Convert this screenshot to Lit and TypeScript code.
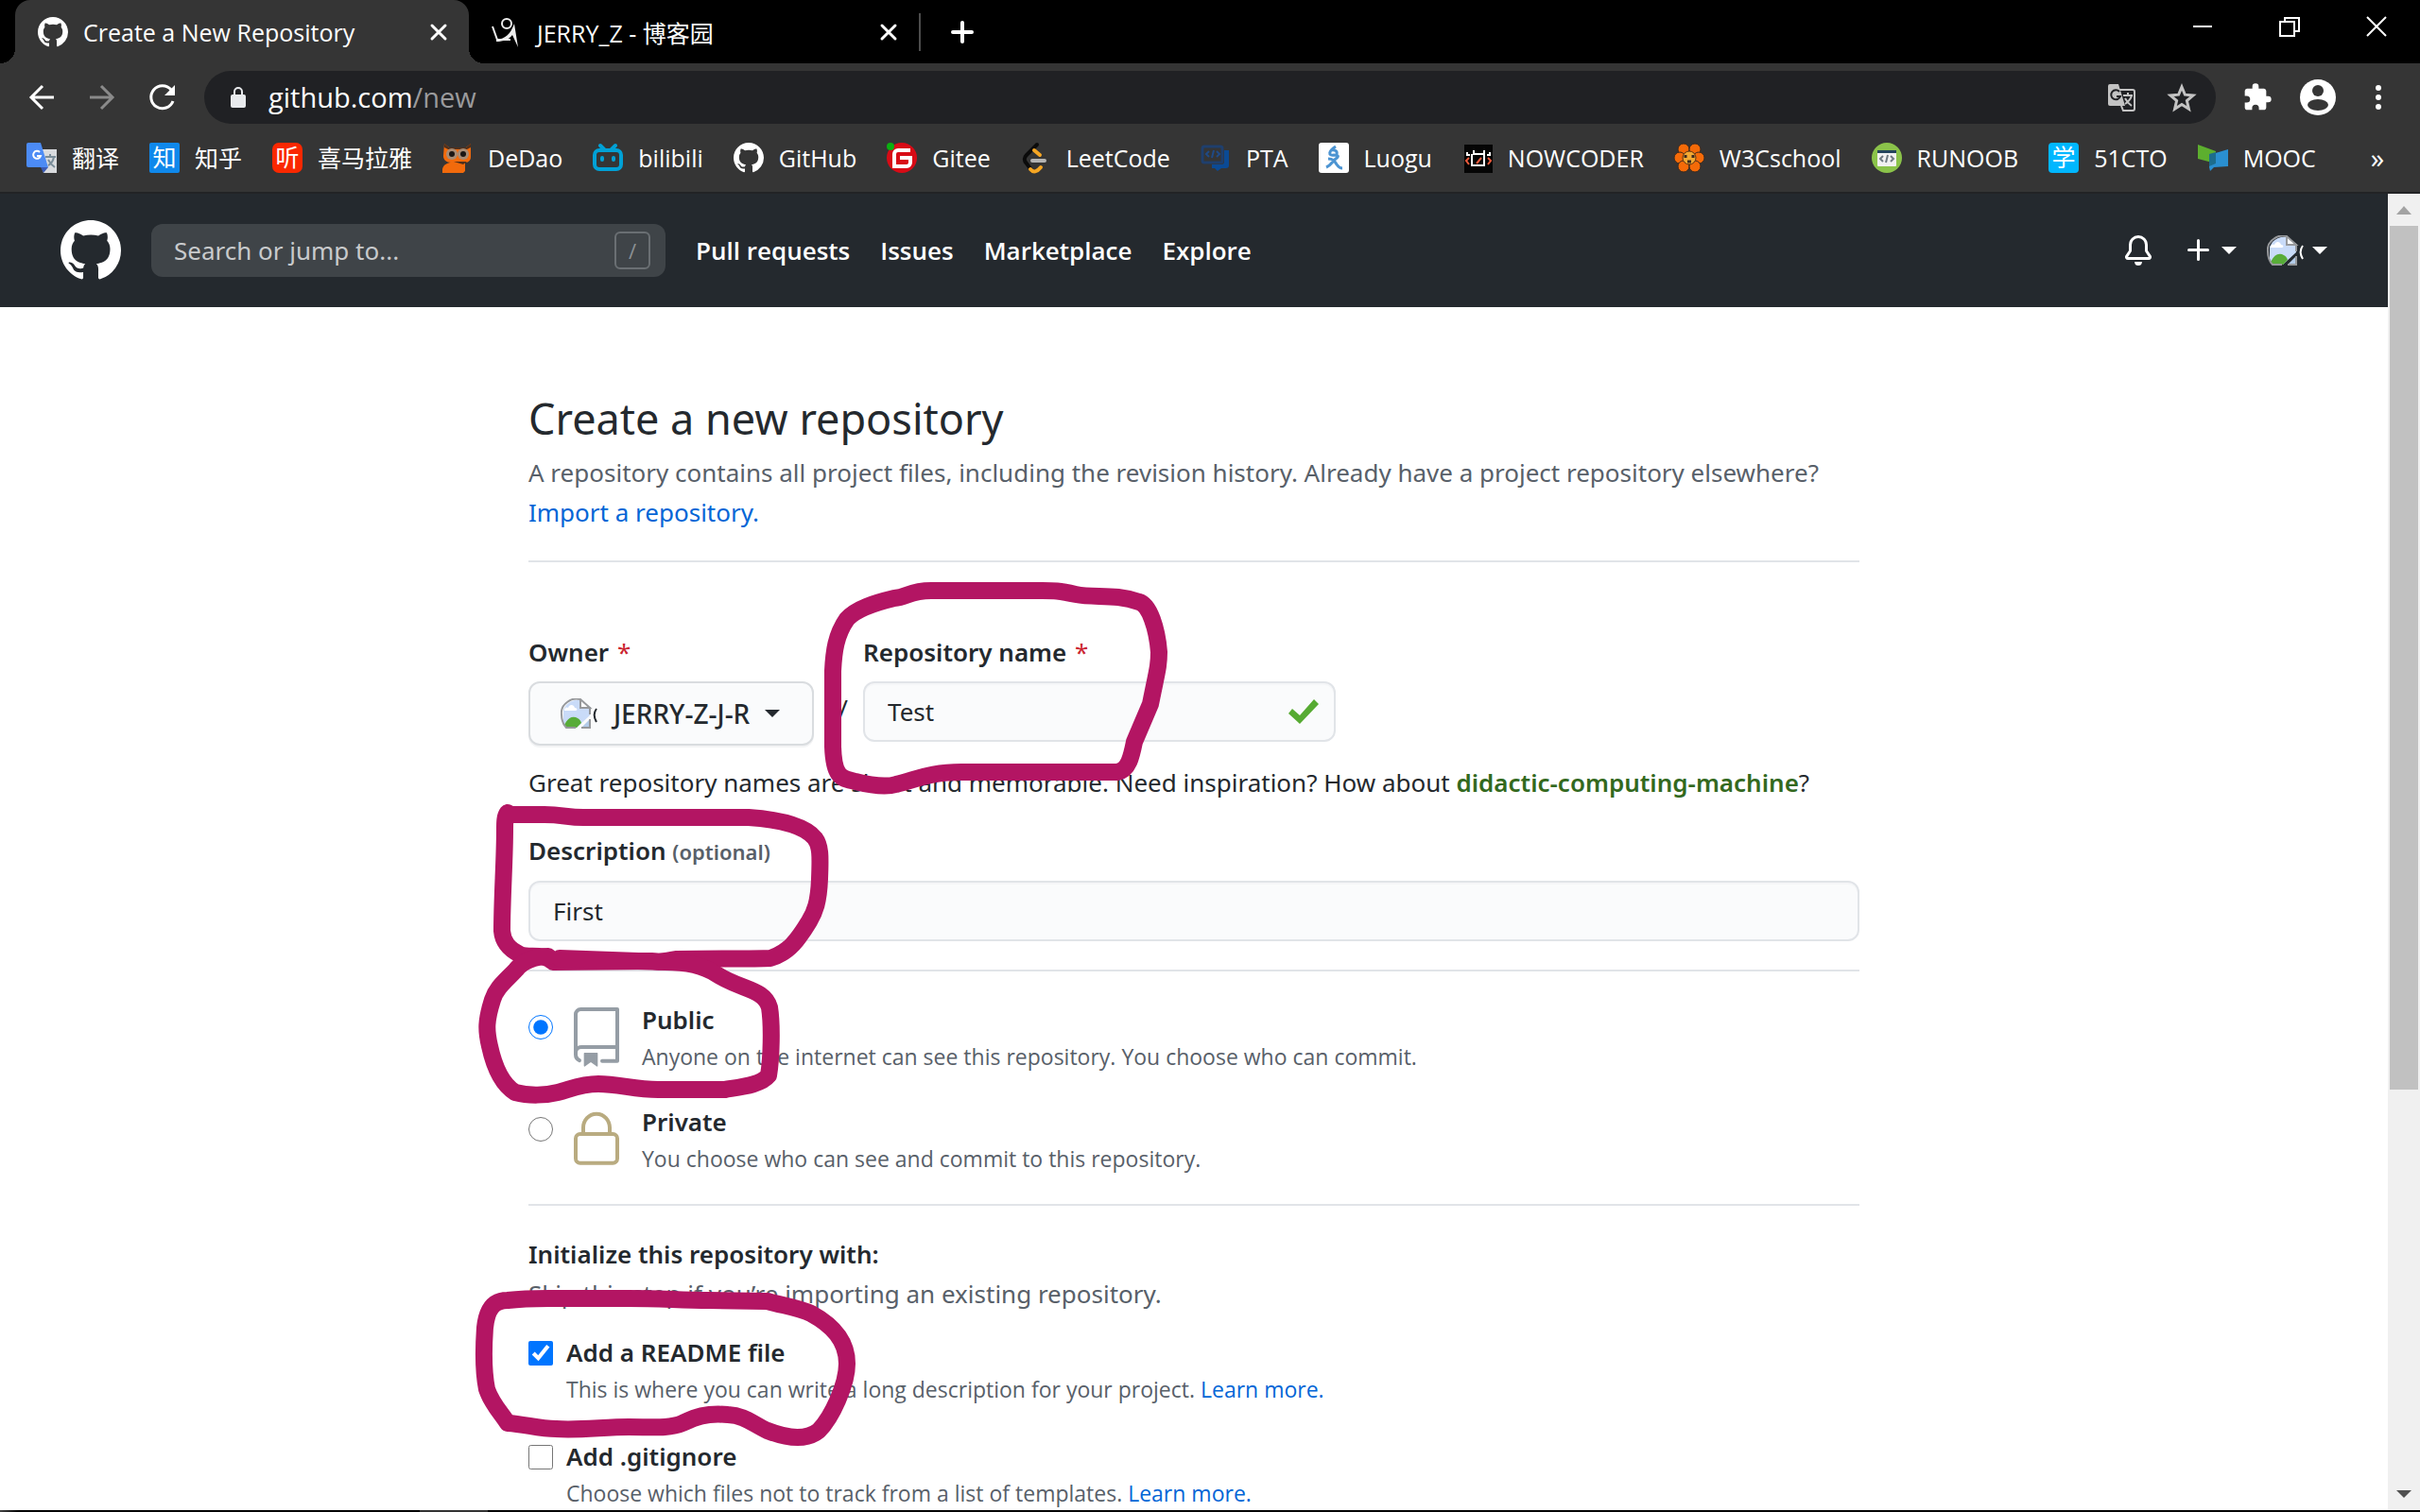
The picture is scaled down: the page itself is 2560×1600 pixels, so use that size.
import { LitElement, html, svg, css } from "lit";
import { customElement } from "lit/decorators.js";

const MARK =
  "M8 0C3.58 0 0 3.58 0 8c0 3.54 2.29 6.53 5.47 7.59.4.07.55-.17.55-.38 0-.19-.01-.82-.01-1.49-2.01.37-2.53-.49-2.69-.94-.09-.23-.48-.94-.82-1.13-.28-.15-.68-.52-.01-.53.63-.01 1.08.58 1.23.82.72 1.21 1.87.87 2.33.66.07-.52.28-.87.51-1.07-1.78-.2-3.64-.89-3.64-3.95 0-.87.31-1.59.82-2.15-.08-.2-.36-1.02.08-2.12 0 0 .67-.21 2.2.82.64-.18 1.32-.27 2-.27.68 0 1.36.09 2 .27 1.53-1.04 2.2-.82 2.2-.82.44 1.1.16 1.92.08 2.12.51.56.82 1.27.82 2.15 0 3.07-1.87 3.75-3.65 3.95.29.25.54.73.54 1.48 0 1.07-.01 1.93-.01 2.2 0 .21.15.46.55.38A8.013 8.013 0 0016 8c0-4.42-3.58-8-8-8z";

const githubMark = (size: number) => html`
  <svg width=${size} height=${size} viewBox="0 0 16 16" fill="#fff" aria-hidden="true">
    <path fill-rule="evenodd" d=${MARK}></path>
  </svg>`;

const icon = (size: number, content: unknown) => html`
  <svg width=${size} height=${size} viewBox="0 0 32 32" fill="none" aria-hidden="true">${content}</svg>`;

const caret = html`
  <svg width="16" height="8" viewBox="0 0 16 8" fill="currentColor" aria-hidden="true"><path d="M0 0h16l-8 8z"></path></svg>`;

/* Missing-image glyph, followed by the clipped edge of its alt text. */
const brokenImage = html`
  <svg width="40" height="32" viewBox="0 0 40 32" fill="none" aria-hidden="true">
    <path d="M21 2Q12 1 6 7L3 12v13l3 6h11L31 18V9z" fill="#c9dbf8"></path>
    <path d="M4 12c1-3 3-3 4-2 1-4 6-4 7 0 3 0 3 3 1 3H4z" fill="#fff"></path>
    <path d="M4 28Q9 18 16 20Q21 22 22 26L17 31H6z" fill="#58ac38"></path>
    <path d="M21 1Q13-1 7 4Q0 9 1 17Q1 26 6 31H16M31 9v8" stroke="#97999c" stroke-width="2"></path>
    <path d="M21 1v9h10z" fill="#fff" stroke="#97999c" stroke-width="2"></path>
    <path d="M31 22v9h-9z" fill="#b3cbe8"></path><path d="M31 22v9h-9" stroke="#97999c" stroke-width="2"></path>
    <path d="M38 11c-3 4-3 9 0 14" stroke="currentColor" stroke-width="2"></path>
  </svg>`;

const glyph = (fill: string, char: string, radius: number) => svg`
  <rect width="32" height="32" rx=${radius} fill=${fill}></rect>
  <text x="16" y="25" font-size="25" text-anchor="middle" fill="#fff" font-family="Noto Sans CJK SC, sans-serif">${char}</text>`;

const bookmarks: { name: string; art: unknown }[] = [
  {
    name: "翻译",
    art: svg`<path d="M12 7h20v25H18z" fill="#d9dbde"></path>
      <path d="M0 2a2 2 0 012-2h13l8 26H2a2 2 0 01-2-2z" fill="#4c8bf5"></path>
      <path d="M15 26h8l-5 6z" fill="#3b5bb5"></path>
      <path d="M20 15h11M25 12v3M29 15c-1 5-4 8-6 9M23 18c2 4 4 6 7 8" stroke="#7a8d99" stroke-width="2"></path>
      <path d="M14 10a4 4 0 10 1 4h-4" stroke="#fff" stroke-width="2"></path>`,
  },
  { name: "知乎", art: glyph("#0f88eb", "知", 2) },
  { name: "喜马拉雅", art: glyph("#fa2800", "听", 7) },
  {
    name: "DeDao",
    art: svg`<path d="M2 1l5 4h18l5-4v14c0 4-3 6-6 6v9l-2 2H0v-4c1-5 6-7 9-7-5 0-8-3-8-7z" fill="#f26a0c"></path>
      <path d="M2 1l5 4h18l5-4v4l-4 2H6L2 5z" fill="#50301c"></path>
      <circle cx="10" cy="12" r="6" fill="#a98c74"></circle><circle cx="22" cy="12" r="6" fill="#a98c74"></circle>
      <circle cx="10" cy="12" r="3" fill="#1b1714"></circle><circle cx="22" cy="12" r="3" fill="#1b1714"></circle>
      <path d="M12 20h14l-4 3z" fill="#50301c"></path>`,
  },
  {
    name: "bilibili",
    art: svg`<rect x="2" y="8" width="28" height="20" rx="5" stroke="#00a1d6" stroke-width="4"></rect>
      <path d="M8 3l5 5M24 3l-5 5" stroke="#00a1d6" stroke-width="4" stroke-linecap="round"></path>
      <path d="M10 16v2M22 16v2" stroke="#00a1d6" stroke-width="4" stroke-linecap="round"></path>`,
  },
  { name: "GitHub", art: svg`<g transform="scale(2)"><path fill="#fff" fill-rule="evenodd" d=${MARK}></path></g>` },
  {
    name: "Gitee",
    art: svg`<circle cx="16" cy="16" r="16" fill="#d80b16"></circle>
      <path d="M25 8H12a4 4 0 00-4 4v13h13a4 4 0 004-4v-5H14" stroke="#fff" stroke-width="4"></path>
      <circle cx="4" cy="4" r="4" fill="#0bb010"></circle>`,
  },
  {
    name: "LeetCode",
    art: svg`<path d="M17 2L6 13c-3 3-3 6 0 9l6 8" stroke="#0b0b0b" stroke-width="4" stroke-linecap="round"></path>
      <path d="M14 8l6 5M10 28c3 4 7 3 11-2" stroke="#f5a623" stroke-width="4" stroke-linecap="round"></path>
      <path d="M12 19h13" stroke="#b3b3b3" stroke-width="4" stroke-linecap="round"></path>`,
  },
  {
    name: "PTA",
    art: svg`<rect x="2" y="4" width="21" height="17" rx="2" stroke="#1f3f6d" stroke-width="3"></rect>
      <path d="M9 9l-3 3 3 3M17 9l3 3-3 3M14 8l-2 8" stroke="#1f4a86" stroke-width="2"></path>
      <path d="M25 8h5v16a3 3 0 01-3 3h-5l-4 3-3-3h-3v-4h10a3 3 0 003-3z" fill="#0b4a94"></path>`,
  },
  {
    name: "Luogu",
    art: svg`<rect width="32" height="32" rx="3" fill="#fff"></rect>
      <path d="M18 4c-8 5-8 10-2 9 6 0 5 2 2 4-4 3-5 7-10 9M10 17c6 0 7 3 9 6s3 4 6 4M13 8c4-1 7 1 6 4" stroke="#4c94d2" stroke-width="3"></path>`,
  },
  {
    name: "NOWCODER",
    art: svg`<rect x="2" y="2" width="30" height="30" fill="#050505"></rect>
      <path d="M5 10v3h3M29 10v3h-3M12 8v4h11V8M10 12v12h13V12" stroke="#fff" stroke-width="2"></path>
      <path d="M7 16l-3 3 3 4M27 16l3 3-3 4M20 16l-5 6" stroke="#ef5b3c" stroke-width="2"></path>`,
  },
  {
    name: "W3Cschool",
    art: svg`<g fill="#f56a08" stroke="#3a2a20" stroke-width="1"><circle cx="10" cy="7" r="6"></circle><circle cx="22" cy="7" r="6"></circle>
      <circle cx="6" cy="16" r="6"></circle><circle cx="26" cy="16" r="6"></circle>
      <circle cx="10" cy="25" r="6"></circle><circle cx="22" cy="25" r="6"></circle></g>
      <circle cx="16" cy="16" r="7" fill="#f2a832" stroke="#5d3212" stroke-width="1"></circle>
      <path d="M12 13v3M20 13v3M14 20h4" stroke="#3a2a20" stroke-width="3"></path>`,
  },
  {
    name: "RUNOOB",
    art: svg`<circle cx="16" cy="16" r="16" fill="#8bc34a"></circle>
      <rect x="6" y="8" width="20" height="17" rx="1" fill="#f1f1f1"></rect><path d="M6 8h20v3H6z" fill="#24445c"></path>
      <path d="M12 14l-3 3 3 3M20 14l3 3-3 3M17 13l-2 8" stroke="#707b82" stroke-width="2"></path>`,
  },
  { name: "51CTO", art: glyph("#00b7ff", "学", 4) },
  {
    name: "MOOC",
    art: svg`<path d="M0 2l19 7v13L0 17z" fill="#5daf2e"></path>
      <path d="M32 7l-20 6v13l1 4 4-4 15-1z" fill="#2a8fd0"></path><path d="M12 12l7-2v12l-7 3z" fill="#1d6d8c"></path>`,
  },
];

@customElement("browser-chrome")
export class BrowserChrome extends LitElement {
  static styles = css`
    :host { display: block; background: #353535; color: #fff; border-bottom: 2px solid #222325; }
    svg { display: block; flex: none; overflow: visible; }
    button { display: flex; padding: 0; border: 0; background: none; color: inherit; font: inherit; }
    a { color: inherit; text-decoration: none; }
    .strip { display: flex; height: 67px; background: #000; padding-left: 16px; font-size: 25px; }
    .tab { display: flex; align-items: center; gap: 16px; width: 476px; box-sizing: border-box; padding: 0 24px; position: relative; }
    .tab-title { flex: 1; white-space: nowrap; }
    .active { width: 480px; background: #353535; border-radius: 16px 16px 0 0; }
    .active::before, .active::after { content: ""; position: absolute; bottom: 0; width: 16px; height: 16px; }
    .active::before { right: 100%; background: radial-gradient(circle at 0 0, #000 16px, #353535 16px); }
    .active::after { left: 100%; background: radial-gradient(circle at 100% 0, #000 16px, #353535 16px); }
    .divided { border-right: 2px solid #4d4d4d; height: 40px; margin-top: 14px; }
    .add { align-items: center; padding-left: 32px; }
    .window { display: flex; align-items: flex-start; gap: 60px; margin-left: auto; padding: 12px 30px; }
    .toolbar { display: flex; align-items: center; padding: 8px 28px 0; }
    .moves { display: flex; gap: 32px; margin-right: 28px; }
    .dim { color: #8a8a8a; }
    .omnibox { display: flex; align-items: center; flex: 1; height: 56px; border-radius: 28px; background: #202124; padding: 0 20px; }
    .address { flex: 1; margin-left: 16px; font-size: 29px; line-height: 40px; outline: none; }
    .path { color: #9a9a9c; }
    .page-actions { display: flex; gap: 32px; color: #c3c3c3; }
    .tools { display: flex; align-items: center; gap: 28px; margin-left: 28px; }
    .bookmarks { display: flex; align-items: center; gap: 32px; height: 72px; padding: 0 38px 0 28px; font-size: 25px; }
    .bookmark { display: flex; align-items: center; gap: 16px; white-space: nowrap; line-height: 40px; }
    .more { margin-left: auto; font-size: 29px; line-height: 40px; }
  `;

  private cross = html`
    <svg width="16" height="16" viewBox="0 0 16 16" stroke="#fff" stroke-width="3" stroke-linecap="round" aria-hidden="true">
      <path d="M1 1l14 14M15 1L1 15"></path>
    </svg>`;

  render() {
    return html`
      <div class="strip">
        <div class="tab active">
          ${githubMark(32)}<span class="tab-title">Create a New Repository</span>
          <button aria-label="Close tab">${this.cross}</button>
        </div>
        <div class="tab">
          ${icon(32, svg`<circle cx="16" cy="7" r="5" stroke="#eee" stroke-width="2"></circle>
            <path d="M1 10l5 14h14" stroke="#eee" stroke-width="2"></path>
            <path d="M5 24c10-1 15-6 19-17l4 25-6-13c-4 5-9 7-17 7z" fill="#eee"></path>`)}
          <span class="tab-title">JERRY_Z - 博客园</span>
          <button aria-label="Close tab">${this.cross}</button>
        </div>
        <div class="divided"></div>
        <button class="add" aria-label="New tab">
          <svg width="24" height="24" viewBox="0 0 24 24" stroke="#fff" stroke-width="4" stroke-linecap="round"><path d="M12 2v20M2 12h20"></path></svg>
        </button>
        <div class="window">
          <button aria-label="Minimize">${icon(32, svg`<path d="M6 16h20" stroke="#fff" stroke-width="2"></path>`)}</button>
          <button aria-label="Restore">${icon(32, svg`<path d="M6 11h15v15H6zM11 11V7h15v14h-5" stroke="#fff" stroke-width="2"></path>`)}</button>
          <button aria-label="Close">${icon(32, svg`<path d="M6 6l20 20M26 6L6 26" stroke="#fff" stroke-width="2"></path>`)}</button>
        </div>
      </div>
      <div class="toolbar">
        <div class="moves">
          <button aria-label="Back">${icon(32, svg`<path d="M29 16H5M17 4L5 16l12 12" stroke="currentColor" stroke-width="3"></path>`)}</button>
          <button class="dim" aria-label="Forward">${icon(32, svg`<path d="M3 16h24M15 4l12 12-12 12" stroke="currentColor" stroke-width="3"></path>`)}</button>
          <button aria-label="Reload">${icon(32, svg`<path d="M25 8a12 12 0 102 12" stroke="currentColor" stroke-width="3"></path><path d="M29 3v11H18z" fill="currentColor"></path>`)}</button>
        </div>
        <div class="omnibox">
          ${icon(32, svg`<rect x="8" y="13" width="16" height="14" rx="2" fill="#e8eaed"></rect><path d="M12 14v-4a4 4 0 018 0v4" stroke="#e8eaed" stroke-width="2"></path>`)}
          <div class="address" role="textbox" aria-label="Address" contenteditable="true">github.com<span class="path">/new</span></div>
          <div class="page-actions">
            <button aria-label="Translate">${icon(32, svg`
              <path d="M12 8h16a2 2 0 012 2v18a2 2 0 01-2 2H18l-2-5" stroke="currentColor" stroke-width="2"></path>
              <path d="M4 2h9l7 23H4a2 2 0 01-2-2V4a2 2 0 012-2z" fill="currentColor"></path>
              <path d="M14 10a5 5 0 101 5h-4" stroke="#202124" stroke-width="2"></path>
              <path d="M18 14h10M23 11v3M27 14c-1 4-4 7-7 9M20 17c2 4 4 6 7 8" stroke="currentColor" stroke-width="2"></path>`)}</button>
            <button aria-label="Bookmark this page">${icon(32, svg`<path d="M16 5l3.400 8.200 8.600.7-6.600 5.700 2 8.600L16 23.500l-7.400 4.700 2-8.600L4 13.900l8.600-.7z" stroke="currentColor" stroke-width="3"></path>`)}</button>
          </div>
        </div>
        <div class="tools">
          <button aria-label="Extensions">
            <svg width="32" height="32" viewBox="0 0 24 24" fill="#fff"><path d="M20.500 11H19V7c0-1.100-.9-2-2-2h-4V3.500a2.500 2.500 0 00-5 0V5H4c-1.100 0-2 .9-2 2v3.800h1.500a2.700 2.700 0 010 5.400H2V20c0 1.100.9 2 2 2h3.800v-1.500a2.700 2.700 0 015.400 0V22H17c1.100 0 2-.9 2-2v-4h1.500a2.500 2.500 0 000-5z"></path></svg>
          </button>
          <button aria-label="Profile">
            <svg width="40" height="40" viewBox="0 0 40 40"><circle cx="20" cy="20" r="19" fill="#fff"></circle><circle cx="20" cy="13" r="6" fill="#353535"></circle><ellipse cx="20" cy="28" rx="11" ry="6" fill="#353535"></ellipse></svg>
          </button>
          <button aria-label="Menu">${icon(32, svg`<g fill="#fff"><circle cx="16" cy="6" r="3"></circle><circle cx="16" cy="16" r="3"></circle><circle cx="16" cy="26" r="3"></circle></g>`)}</button>
        </div>
      </div>
      <nav class="bookmarks" aria-label="Bookmarks">
        ${bookmarks.map((b) => html`<a class="bookmark" href="#">${icon(32, b.art)}<span>${b.name}</span></a>`)}
        <button class="more" aria-label="More bookmarks">»</button>
      </nav>
    `;
  }
}

@customElement("site-header")
export class SiteHeader extends LitElement {
  static styles = css`
    :host { display: flex; align-items: center; height: 120px; padding: 0 64px; background: #24292e; color: #fff; font-size: 26px; }
    svg { display: block; flex: none; }
    a { display: flex; color: inherit; text-decoration: none; font-weight: 600; }
    button { display: flex; align-items: center; gap: 8px; padding: 0; border: 0; background: none; color: inherit; }
    .search { display: flex; align-items: center; width: 544px; height: 56px; box-sizing: border-box; padding: 0 16px 0 24px; margin: 0 32px; border-radius: 12px; background: #3f4448; }
    .search-input { flex: 1; min-width: 0; padding: 0; border: 0; outline: 0; background: none; color: #fff; font: inherit; font-family: "Noto Sans", sans-serif; }
    .search-input::placeholder { color: #c8cacc; opacity: 1; }
    .key { display: grid; place-items: center; width: 34px; height: 36px; border: 2px solid #6a6f73; border-radius: 6px; color: #8b9094; font-size: 22px; line-height: 36px; }
    .links { display: flex; gap: 32px; }
    .account { display: flex; align-items: center; gap: 32px; margin-left: auto; }
  `;

  render() {
    return html`
      <a href="#" aria-label="Homepage">${githubMark(64)}</a>
      <label class="search">
        <input class="search-input" type="text" placeholder="Search or jump to..." aria-label="Search or jump to" />
        <span class="key">/</span>
      </label>
      <nav class="links">
        ${["Pull requests", "Issues", "Marketplace", "Explore"].map((t) => html`<a href="#">${t}</a>`)}
      </nav>
      <div class="account">
        <button aria-label="Notifications">
          <svg width="32" height="32" viewBox="0 0 16 16" fill="#fff">
            <path d="M8 16a2 2 0 001.985-1.750c.017-.137-.097-.25-.235-.25h-3.500c-.138 0-.252.113-.235.25A2 2 0 008 16z"></path>
            <path fill-rule="evenodd" d="M8 1.500A3.500 3.500 0 004.500 5v2.947c0 .346-.102.683-.294.97l-1.703 2.556a.018.018 0 00-.003.01l.001.006.004.006.006.004.007.001h10.964l.007-.001.006-.004.004-.006.001-.007a.017.017 0 00-.003-.01l-1.703-2.554a1.750 1.750 0 01-.294-.97V5A3.500 3.500 0 008 1.500zM3 5a5 5 0 0110 0v2.947c0 .05.015.098.042.139l1.703 2.555A1.518 1.518 0 0113.482 13H2.518a1.518 1.518 0 01-1.263-2.360l1.703-2.554A.25.25 0 003 7.947V5z"></path>
          </svg>
        </button>
        <button aria-label="Create new">
          <svg width="32" height="32" viewBox="0 0 16 16" fill="#fff"><path d="M7.750 2a.75.75 0 01.75.75V7h4.250a.75.75 0 110 1.500H8.500v4.250a.75.75 0 11-1.500 0V8.500H2.750a.75.75 0 010-1.500H7V2.750A.75.75 0 017.750 2z"></path></svg>
          ${caret}
        </button>
        <button aria-label="Your account">${brokenImage}${caret}</button>
      </div>
    `;
  }
}

/* Freehand marker loops, in window coordinates. */
const loops = [
  "M1103 625H985C962 625 960 632 946 633C925 638 906 644 896 655C884 672 882 690 881 710V790C882 820 888 824 905 827C925 832 938 833 948 830C972 824 985 817 1017 817L1182 817C1194 815 1197 800 1200 785L1217 745C1224 710 1226 705 1226 690C1224 665 1216 640 1205 637C1180 628 1158 633 1138 629C1120 625 1115 625 1103 625Z",
  "M537 862H576C595 862 600 865 617 865H792C820 867 850 872 862 887C868 895 868 905 867 930C866 955 862 965 856 975C845 993 835 1008 815 1014C790 1015 760 1014 716 1015C702 1017 700 1019 690 1017L585 1018C575 1008 560 1014 550 1010C538 1004 532 997 531 985C531 950 534 910 534 877C534 870 534 864 537 860Z",
  "M580 1012C565 1012 552 1018 546 1026C535 1038 525 1045 521 1058C514 1080 514 1090 518 1107C523 1130 532 1148 545 1156C560 1160 578 1159 590 1156C605 1152 615 1147 633 1147C655 1147 675 1154 700 1153H767C785 1150 805 1148 813 1138C816 1120 817 1085 814 1066C808 1046 785 1048 758 1031C748 1024 730 1018 703 1018L592 1014",
  "M537 1376C560 1373 580 1374 600 1374H665C700 1374 720 1376 750 1376L812 1377C830 1382 845 1384 858 1390C880 1402 896 1418 896 1443C896 1465 880 1500 866 1514C852 1525 830 1521 812 1514C795 1506 788 1498 770 1497C745 1495 735 1500 722 1506C708 1512 690 1510 665 1510C640 1510 610 1514 588 1512C570 1512 555 1507 537 1506C530 1495 520 1485 515 1470C510 1445 512 1420 513 1405C515 1385 522 1376 537 1376Z",
];

@customElement("repo-form")
export class RepoForm extends LitElement {
  static styles = css`
    :host { display: block; background: #fff; color: #24292e; font-family: "Noto Sans", sans-serif; font-size: 26px; line-height: 42px; }
    svg { display: block; flex: none; }
    .page { position: relative; max-width: 1408px; margin: 0 auto; padding-top: 82px; }
    .title { margin: 0; font-size: 45px; line-height: 72px; font-weight: 400; }
    .text { margin: 0; }
    .muted { color: #586069; }
    .link { color: #0366d6; text-decoration: none; }
    .rule { height: 2px; margin: 30px 0; border: 0; background: #e1e4e8; }
    .names { display: flex; align-items: flex-start; gap: 16px; padding-top: 44px; margin-bottom: 18px; }
    .field { display: flex; flex-direction: column; gap: 10px; }
    .name { width: 500px; }
    .label { font-weight: 600; }
    .required { color: #cb2431; font-weight: 400; margin-left: 2px; }
    .optional { font-size: 22px; color: #586069; }
    .owner { display: flex; align-items: center; gap: 16px; width: 302px; height: 68px; padding: 0 0 0 32px; border: 2px solid #d9dcdf; border-radius: 12px; background: #fafbfc; box-shadow: 0 2px 0 #f3f4f5; color: inherit; font: inherit; font-size: 28px; font-weight: 500; }
    .slash { align-self: center; width: 20px; padding-top: 40px; text-align: right; }
    .control { display: flex; align-items: center; height: 64px; box-sizing: border-box; padding: 0 16px 0 24px; border: 2px solid #e1e4e8; border-radius: 12px; background: #fafbfc; box-shadow: inset 0 2px 0 #f5f6f8; }
    .input { flex: 1; min-width: 0; padding: 0; border: 0; outline: 0; background: none; color: inherit; font: inherit; }
    .suggestion { color: #33691e; }
    .description { margin-top: 30px; }
    .choices { display: flex; flex-direction: column; gap: 30px; }
    .choice { display: flex; }
    .radio { width: 26px; height: 26px; margin: 16px 14px 0 0; }
    .badge { margin: 8px 16px 0 0; }
    .check { width: 26px; height: 26px; margin: 9px 14px 0 0; }
    .inits { display: flex; flex-direction: column; gap: 32px; margin-top: 20px; }
    .note { margin: 0; font-family: "Open Sans", sans-serif; font-size: 23px; line-height: 36px; color: #586069; }
    .marker { position: absolute; left: 0; top: 0; overflow: visible; pointer-events: none; }
  `;

  render() {
    return html`
      <form class="page">
        <h1 class="title">Create a new repository</h1>
        <p class="text muted">
          A repository contains all project files, including the revision history. Already have a project repository elsewhere?<br />
          <a class="link" href="#">Import a repository.</a>
        </p>
        <hr class="rule" />
        <div class="names">
          <div class="field">
            <label class="label" for="owner">Owner <span class="required">*</span></label>
            <button class="owner" id="owner" type="button">${brokenImage}<span>JERRY-Z-J-R</span>${caret}</button>
          </div>
          <span class="slash">/</span>
          <div class="field name">
            <label class="label" for="name">Repository name <span class="required">*</span></label>
            <div class="control">
              <input class="input" id="name" type="text" value="Test" />
              <svg width="32" height="32" viewBox="0 0 32 32" fill="#57ab33" aria-hidden="true"><path d="M32 8L12 29 0 18l4-5 8 7L27 3z"></path></svg>
            </div>
          </div>
        </div>
        <p class="text">
          Great repository names are short and memorable. Need inspiration? How about
          <strong class="label suggestion">didactic-computing-machine</strong>?
        </p>
        <div class="field description">
          <label class="label" for="description">Description <span class="optional">(optional)</span></label>
          <div class="control"><input class="input" id="description" type="text" value="First" /></div>
        </div>
        <hr class="rule" />
        <div class="choices">
          <div class="choice">
            <input class="radio" type="radio" name="visibility" id="public" checked />
            <svg class="badge" width="64" height="64" viewBox="0 0 24 24" fill="#959da5" aria-hidden="true">
              <path fill-rule="evenodd" d="M3 2.750A2.750 2.750 0 015.750 0h14.500a.75.75 0 01.75.75v20.500a.75.75 0 01-.75.75h-6a.75.75 0 010-1.500h5.250v-4H6A1.500 1.500 0 004.500 18v.75c0 .716.43 1.334 1.050 1.605a.75.75 0 01-.6 1.374A3.250 3.250 0 013 18.750v-16zM19.500 1.500V15H6c-.546 0-1.059.146-1.500.401V2.750c0-.69.56-1.250 1.250-1.250H19.500z"></path>
              <path d="M7 18.250a.25.25 0 01.25-.25h5a.25.25 0 01.25.25v5.010a.25.25 0 01-.397.201l-2.206-1.604a.25.25 0 00-.294 0L7.397 23.460a.25.25 0 01-.397-.2v-5.010z"></path>
            </svg>
            <div>
              <label class="label" for="public">Public</label>
              <p class="note">Anyone on the internet can see this repository. You choose who can commit.</p>
            </div>
          </div>
          <div class="choice">
            <input class="radio" type="radio" name="visibility" id="private" />
            <svg class="badge" width="64" height="64" viewBox="0 0 24 24" fill="#b9ab80" aria-hidden="true">
              <path fill-rule="evenodd" d="M6 9V7.250C6 3.845 8.503 1 12 1s6 2.845 6 6.250V9h.5a2.500 2.500 0 012.500 2.500v8a2.500 2.500 0 01-2.500 2.500h-13A2.500 2.500 0 013 19.500v-8A2.500 2.500 0 015.500 9H6zm1.500-1.750C7.500 4.580 9.422 2.500 12 2.500c2.578 0 4.500 2.080 4.500 4.750V9h-9V7.250zm-3 4.250a1 1 0 011-1h13a1 1 0 011 1v8a1 1 0 01-1 1h-13a1 1 0 01-1-1v-8z"></path>
            </svg>
            <div>
              <label class="label" for="private">Private</label>
              <p class="note">You choose who can see and commit to this repository.</p>
            </div>
          </div>
        </div>
        <hr class="rule" />
        <p class="text label">Initialize this repository with:</p>
        <p class="text muted">Skip this step if you’re importing an existing repository.</p>
        <div class="inits">
          <div class="choice">
            <input class="check" type="checkbox" id="readme" checked />
            <div>
              <label class="label" for="readme">Add a README file</label>
              <p class="note">This is where you can write a long description for your project. <a class="link" href="#">Learn more.</a></p>
            </div>
          </div>
          <div class="choice">
            <input class="check" type="checkbox" id="gitignore" />
            <div>
              <label class="label" for="gitignore">Add .gitignore</label>
              <p class="note">Choose which files not to track from a list of templates. <a class="link" href="#">Learn more.</a></p>
            </div>
          </div>
        </div>
        <svg class="marker" width="1408" height="1273" viewBox="559 325 1408 1273" fill="none" stroke="#b31563" stroke-width="18" stroke-linejoin="round" stroke-linecap="round" aria-hidden="true">
          ${loops.map((d) => svg`<path d=${d}></path>`)}
        </svg>
      </form>
    `;
  }
}

@customElement("app-root")
export class AppRoot extends LitElement {
  static styles = css`
    :host { display: flex; flex-direction: column; height: 100vh; font-family: "Open Sans", "Noto Sans", "Noto Sans CJK SC", sans-serif; }
    .viewport { display: flex; flex: 1; min-height: 0; overflow: hidden; }
    .document { flex: 1; min-width: 0; overflow: hidden; background: #fff; }
    .scrollbar { display: flex; flex-direction: column; align-items: center; width: 34px; background: #f0f0f0; }
    .arrow { display: block; flex: none; }
    .track { display: flex; flex-direction: column; flex: 1; }
    .thumb { width: 30px; height: 69%; background: #c1c1c1; }
    .taskbar { height: 2px; background: linear-gradient(90deg, #444 0, #000 20px, #000 444px, #333 444px, #333 516px, #000 516px); }
  `;

  render() {
    return html`
      <browser-chrome></browser-chrome>
      <div class="viewport">
        <main class="document">
          <site-header></site-header>
          <repo-form></repo-form>
        </main>
        <div class="scrollbar" aria-hidden="true">
          <svg class="arrow" width="34" height="34" viewBox="0 0 34 34"><path d="M9 22h16l-8-9z" fill="#a3a3a3"></path></svg>
          <div class="track"><div class="thumb"></div></div>
          <svg class="arrow" width="34" height="34" viewBox="0 0 34 34"><path d="M9 13h16l-8 8z" fill="#505050"></path></svg>
        </div>
      </div>
      <div class="taskbar"></div>
    `;
  }
}
